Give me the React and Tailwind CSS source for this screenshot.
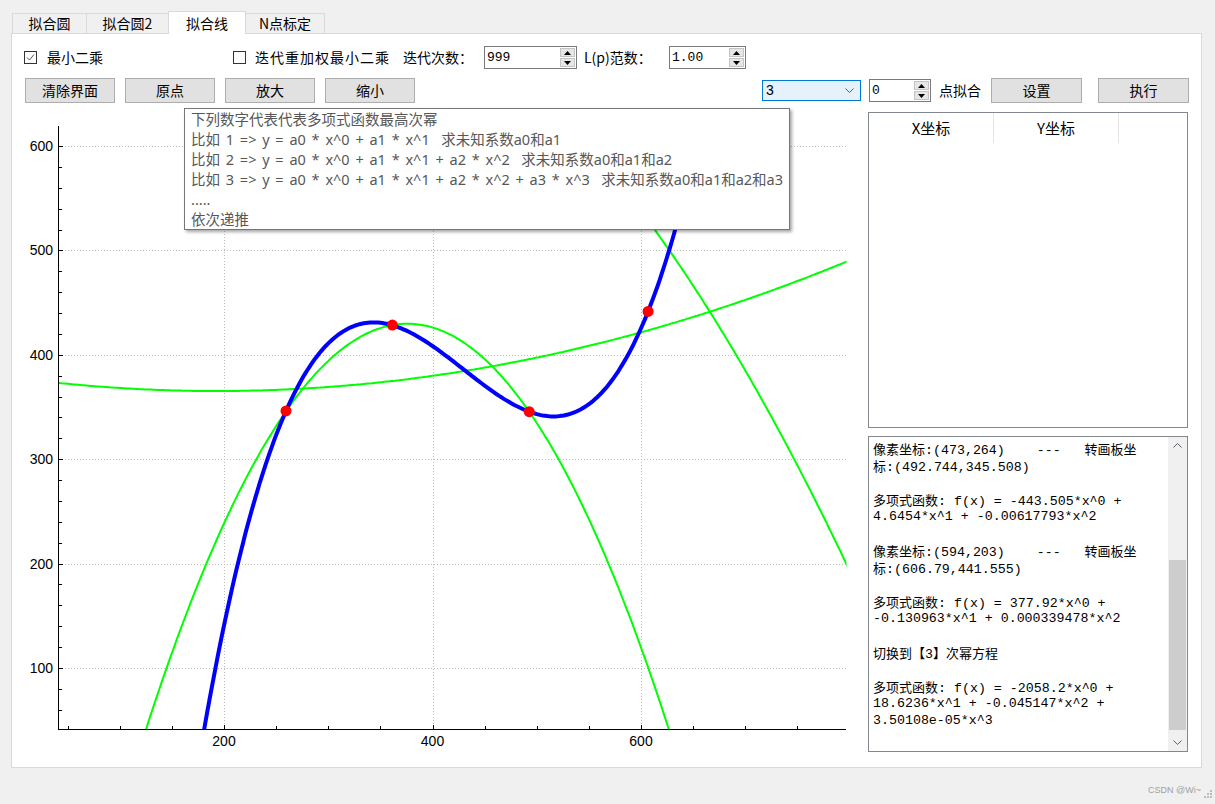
import React from "react";

// chart mapping (data -> page px)
const px = (x) => 224 + (x - 200) * 1.0425;
const py = (y) => Math.max(-3000, Math.min(4000, 146 + (600 - y) * 1.044));

const cubic = (x) => -2058.2 + 18.6236 * x - 0.045147 * x * x + 3.50108e-5 * x * x * x;
const quadA = (x) => -443.505 + 4.6454 * x - 0.00617793 * x * x;
const quadB = (x) => 377.92 - 0.130963 * x + 0.000339478 * x * x;
const quadC = (x) => 519.5 - 1.384 * (x - 613.4) - 0.001947 * (x - 613.4) ** 2;

const curvePath = (f) => {
  const pts = [];
  for (let x = 36; x <= 802; x += 2) pts.push(`${px(x).toFixed(1)},${py(f(x)).toFixed(1)}`);
  return "M" + pts.join("L");
};

const dots = [
  [259.5, 346.2],
  [361.5, 428.5],
  [492.74, 345.51],
  [606.79, 441.56],
];

const logLines = [
  "像素坐标:(473,264)    ---   转画板坐",
  "标:(492.744,345.508)",
  "",
  "多项式函数: f(x) = -443.505*x^0 +",
  "4.6454*x^1 + -0.00617793*x^2",
  "",
  "像素坐标:(594,203)    ---   转画板坐",
  "标:(606.79,441.555)",
  "",
  "多项式函数: f(x) = 377.92*x^0 +",
  "-0.130963*x^1 + 0.000339478*x^2",
  "",
  "切换到【3】次幂方程",
  "",
  "多项式函数: f(x) = -2058.2*x^0 +",
  "18.6236*x^1 + -0.045147*x^2 +",
  "3.50108e-05*x^3",
];

const tipLines = [
  "下列数字代表代表多项式函数最高次幂",
  "比如 1 => y = a0 * x^0 + a1 * x^1  求未知系数a0和a1",
  "比如 2 => y = a0 * x^0 + a1 * x^1 + a2 * x^2  求未知系数a0和a1和a2",
  "比如 3 => y = a0 * x^0 + a1 * x^1 + a2 * x^2 + a3 * x^3  求未知系数a0和a1和a2和a3",
  ".....",
  "依次递推",
];

const Mixed = ({ text }) =>
  text.split(/([\u3000-\u303f\u4e00-\u9fff\uff00-\uffef]+)/).map((s, i) =>
    i % 2 ? (
      <span key={i} className="font-['Noto_Sans_CJK_SC',sans-serif] text-[13px]">
        {s}
      </span>
    ) : (
      s
    )
  );

const Checkbox = ({ checked }) => (
  <span className="flex h-[13px] w-[13px] shrink-0 items-center justify-center border border-[#333333] bg-white">
    {checked && (
      <svg width="9" height="9" viewBox="0 0 9 9">
        <path d="M1 4.5 L3.5 7 L8 1.5" fill="none" stroke="#555" strokeWidth="1" />
      </svg>
    )}
  </span>
);

const Button = ({ children, className }) => (
  <div
    className={`${className} flex h-[25px] items-center justify-center border border-[#adadad] bg-[#e1e1e1] text-[14px] text-black`}
  >
    {children}
  </div>
);

const SpinBox = ({ value, className }) => (
  <div className={`${className} flex h-[23px] items-stretch border border-[#7a7a7a] bg-white`}>
    <span className="flex-1 pl-[2px] font-['Liberation_Mono',monospace] text-[13px] leading-[21px] text-black">
      {value}
    </span>
    <div className="my-px mr-px flex w-[15px] flex-col gap-px">
      <div className="flex flex-1 items-center justify-center border border-[#c4c4c4] bg-[#e6e6e6]">
        <svg width="7" height="4" viewBox="0 0 7 4">
          <path d="M0 4 L3.5 0 L7 4 Z" fill="#000" />
        </svg>
      </div>
      <div className="flex flex-1 items-center justify-center border border-[#c4c4c4] bg-[#e6e6e6]">
        <svg width="7" height="4" viewBox="0 0 7 4">
          <path d="M0 0 L3.5 4 L7 0 Z" fill="#000" />
        </svg>
      </div>
    </div>
  </div>
);

const Tab = ({ label, active, className }) => (
  <div
    className={`${className} ${
      active ? "relative z-10 -mb-px h-[23px] bg-white" : "h-[20px] bg-[#f0f0f0]"
    } -ml-px flex items-center justify-center border border-b-0 border-[#d9d9d9] text-[14px] text-black`}
  >
    {label}
  </div>
);

const Chart = () => {
  const yTicks = [];
  for (let y = 60; y <= 600; y += 20) yTicks.push(y);
  const xTicks = [];
  for (let x = 50; x <= 750; x += 50) xTicks.push(x);

  return (
    <svg width="830" height="650" viewBox="18 112 830 650" className="ml-[6px] shrink-0">
      <defs>
        <clipPath id="plot">
          <rect x="58.5" y="126" width="788" height="603" />
        </clipPath>
      </defs>
      {[100, 200, 300, 400, 500, 600].map((y) => (
        <line key={y} x1="59" x2="846" y1={Math.round(py(y)) + 0.5} y2={Math.round(py(y)) + 0.5} stroke="#bdbdbd" strokeDasharray="1 2" />
      ))}
      {[200, 400, 600].map((x) => (
        <line key={x} x1={Math.round(px(x)) + 0.5} x2={Math.round(px(x)) + 0.5} y1="126" y2="729" stroke="#bdbdbd" strokeDasharray="1 2" />
      ))}
      <g clipPath="url(#plot)">
        <path d={curvePath(quadB)} fill="none" stroke="#00ff00" strokeWidth="2" />
        <path d={curvePath(quadA)} fill="none" stroke="#00ff00" strokeWidth="2" />
        <path d={curvePath(quadC)} fill="none" stroke="#00ff00" strokeWidth="2" />
        <path d={curvePath(cubic)} fill="none" stroke="#0000ff" strokeWidth="4" />
        {dots.map(([x, y]) => (
          <circle key={x} cx={px(x)} cy={py(y)} r="5.5" fill="#ff0000" />
        ))}
      </g>
      <line x1="58.5" x2="58.5" y1="126" y2="729.5" stroke="#000" />
      <line x1="58" x2="846" y1="729.5" y2="729.5" stroke="#000" />
      {yTicks.map((y) => (
        <line key={y} x1="58" x2={y % 100 ? 62 : 63} y1={Math.round(py(y)) + 0.5} y2={Math.round(py(y)) + 0.5} stroke="#000" />
      ))}
      {xTicks.map((x) => (
        <line key={x} x1={Math.round(px(x)) + 0.5} x2={Math.round(px(x)) + 0.5} y1="729" y2={x % 200 ? 726 : 725} stroke="#000" />
      ))}
      {[100, 200, 300, 400, 500, 600].map((y) => (
        <text key={y} x="53" y={py(y) + 5} textAnchor="end" fontSize="14" fontFamily="Liberation Sans, sans-serif" fill="#000">
          {y}
        </text>
      ))}
      {[200, 400, 600].map((x) => (
        <text key={x} x={px(x)} y="746" textAnchor="middle" fontSize="14" fontFamily="Liberation Sans, sans-serif" fill="#000">
          {x}
        </text>
      ))}
    </svg>
  );
};

export default function App() {
  return (
    <div className="relative h-[804px] w-[1215px] overflow-hidden bg-[#f0f0f0] pl-[11px] pt-[11px] font-['Noto_Sans_CJK_SC',sans-serif]">
      {/* tabs */}
      <div className="flex h-[22px] items-end pl-[2px]">
        <Tab label="拟合圆" className="w-[75px]" />
        <Tab label="拟合圆2" className="w-[83px]" />
        <Tab label="拟合线" active className="w-[78px]" />
        <Tab label="N点标定" className="w-[80px]" />
      </div>

      {/* page */}
      <div className="flex h-[735px] w-[1191px] flex-col border border-[#d9d9d9] bg-white">
        <div className="mt-[12px] flex h-[23px] items-center pl-[12px] text-[14px] text-black">
          <div className="flex w-[209px] items-center gap-[10px]">
            <Checkbox checked />
            <span>最小二乘</span>
          </div>
          <div className="flex w-[170px] items-center gap-[9px]">
            <Checkbox />
            <span className="tracking-[1px]">迭代重加权最小二乘</span>
          </div>
          <span className="w-[81px]">迭代次数：</span>
          <SpinBox value="999" className="w-[93px]" />
          <span className="ml-[7px] w-[85px]">L(p)范数：</span>
          <SpinBox value="1.00" className="w-[77px]" />
        </div>

        <div className="mt-[9px] flex h-[25px] items-center justify-between pl-[13px] pr-[12px]">
          <div className="flex gap-[10px]">
            <Button className="w-[90px]">清除界面</Button>
            <Button className="w-[90px]">原点</Button>
            <Button className="w-[90px]">放大</Button>
            <Button className="w-[90px]">缩小</Button>
          </div>
          <div className="flex items-center">
            <div className="flex h-[21px] w-[99px] items-center justify-between border border-[#0078d7] bg-[#e5f1fb] pl-[3px] pr-[6px]">
              <span className="font-['Liberation_Sans',sans-serif] text-[14px] text-black">3</span>
              <svg width="9" height="5" viewBox="0 0 9 5">
                <path d="M0.5 0.5 L4.5 4.5 L8.5 0.5" fill="none" stroke="#606060" strokeWidth="1" />
              </svg>
            </div>
            <SpinBox value="0" className="ml-[8px] w-[62px]" />
            <span className="ml-[8px] w-[44px] text-[14px] text-black">点拟合</span>
            <Button className="ml-[8px] w-[91px]">设置</Button>
            <Button className="ml-[16px] w-[91px]">执行</Button>
          </div>
        </div>

        <div className="mt-[9px] flex">
          <Chart />
          <div className="ml-[20px] flex w-[320px] flex-col gap-[8px]">
            <div className="h-[316px] border border-[#828790] bg-white">
              <div className="flex h-[30px] text-[15px] text-black">
                <div className="flex w-[125px] items-center justify-center border-r border-[#e5e5e5]">X坐标</div>
                <div className="flex w-[125px] items-center justify-center border-r border-[#e5e5e5]">Y坐标</div>
              </div>
            </div>
            <div className="flex h-[316px] border border-[#828790] bg-white">
              <div className="flex-1 overflow-hidden pl-[4px] pt-[3px] font-['Liberation_Mono',monospace] text-[13.3px] leading-[17px] text-black">
                {logLines.map((l, i) => (
                  <div key={i} className="h-[17px] whitespace-pre">
                    <Mixed text={l} />
                  </div>
                ))}
              </div>
              <div className="flex w-[19px] flex-col bg-[#f0f0f0]">
                <div className="flex h-[17px] items-center justify-center">
                  <svg width="9" height="5" viewBox="0 0 9 5">
                    <path d="M0.5 4.5 L4.5 0.5 L8.5 4.5" fill="none" stroke="#606060" strokeWidth="1" />
                  </svg>
                </div>
                <div className="flex-1 pt-[106px]">
                  <div className="mx-px h-[170px] bg-[#cdcdcd]" />
                </div>
                <div className="flex h-[17px] items-center justify-center">
                  <svg width="9" height="5" viewBox="0 0 9 5">
                    <path d="M0.5 0.5 L4.5 4.5 L8.5 0.5" fill="none" stroke="#606060" strokeWidth="1" />
                  </svg>
                </div>
              </div>
            </div>
          </div>
        </div>
      </div>

      {/* tooltip over the chart */}
      <div className="absolute left-[184px] top-[108px] z-20 h-[122px] w-[606px] border border-[#767676] bg-white pl-[6px] font-['Noto_Sans','Noto_Sans_CJK_SC',sans-serif] text-[14.5px] leading-[20px] text-[#575757] [word-spacing:2px] shadow-[2px_2px_3px_rgba(0,0,0,0.35)]">
        {tipLines.map((l) => (
          <div key={l} className="whitespace-pre">
            {l}
          </div>
        ))}
      </div>

      {/* watermark + grip */}
      <div className="absolute bottom-[7px] right-[14px] font-['Liberation_Sans',sans-serif] text-[9px] text-[#a0a0a0]">
        CSDN @Wi~
      </div>
      <svg className="absolute bottom-[5px] right-[3px]" width="10" height="10" viewBox="0 0 10 10">
        {[
          [8, 0],
          [8, 3],
          [5, 3],
          [8, 6],
          [5, 6],
          [2, 6],
        ].map(([x, y]) => (
          <rect key={`${x}-${y}`} x={x} y={y + 1} width="2" height="2" fill="#bcbcbc" />
        ))}
      </svg>
    </div>
  );
}
